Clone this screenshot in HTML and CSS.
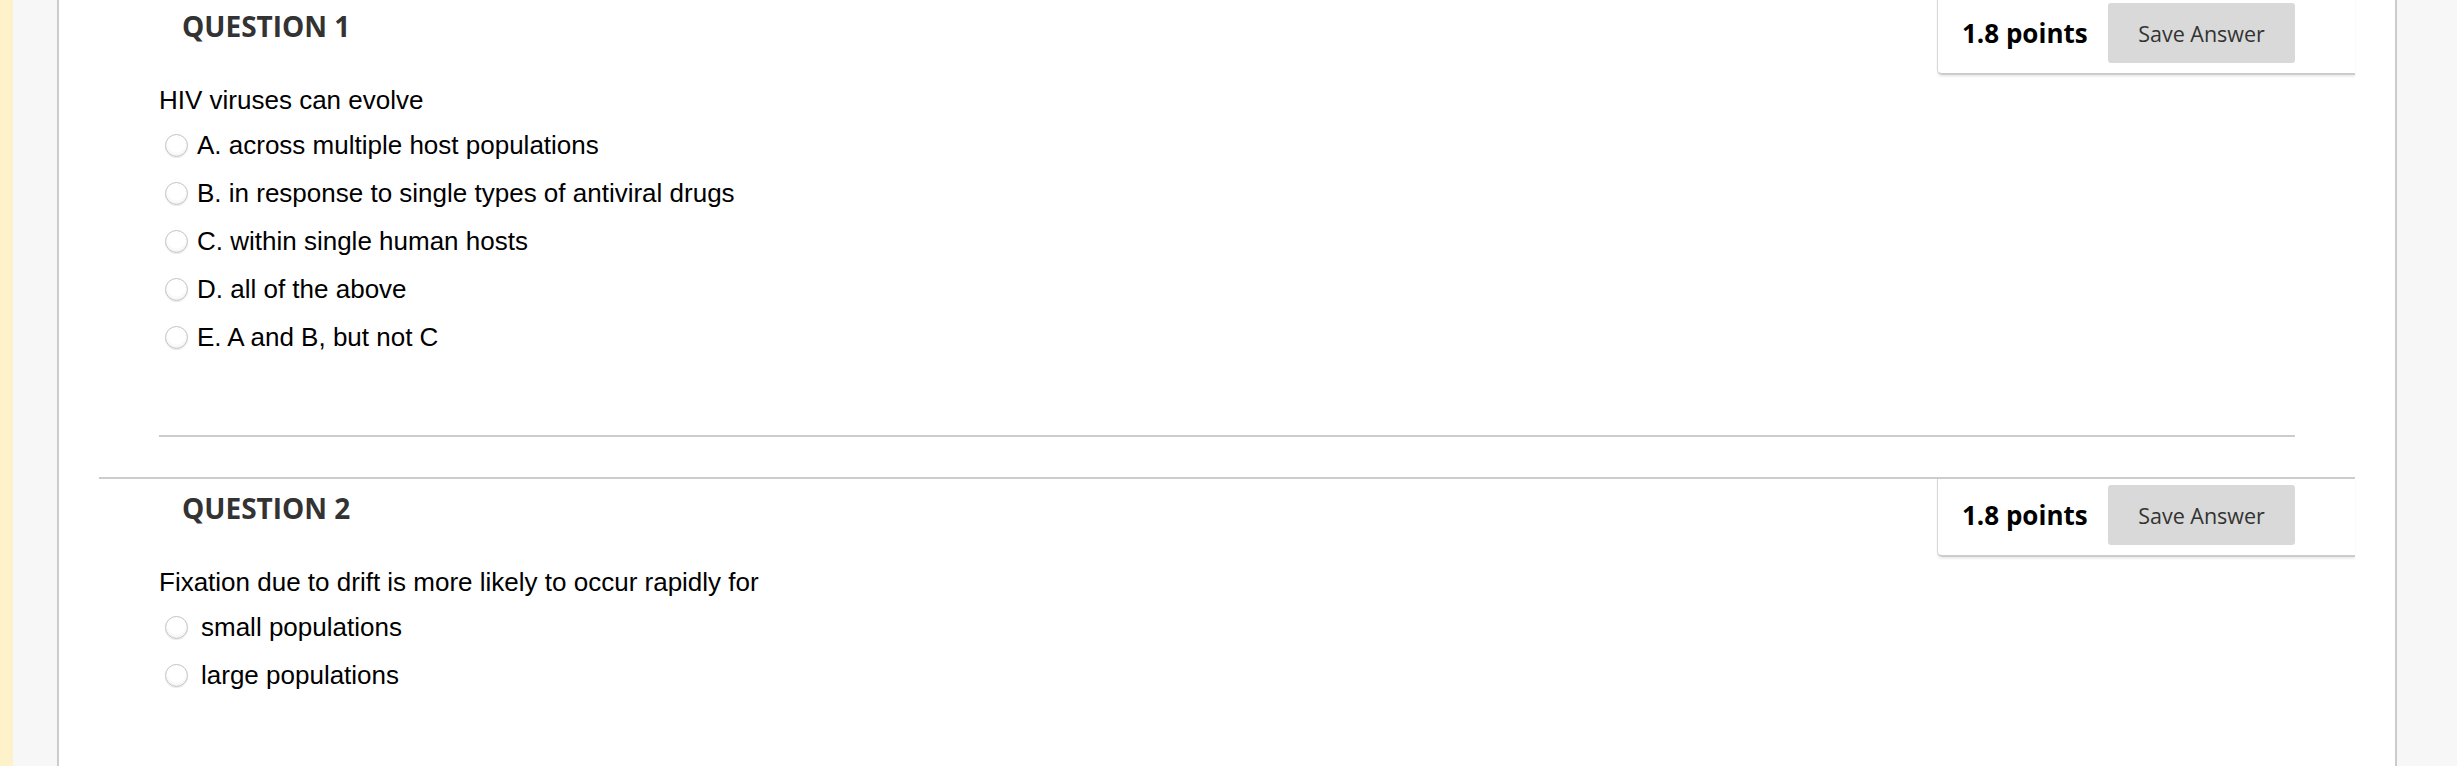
FILE: index.html
```html
<!DOCTYPE html>
<html lang="en">
<head>
<meta charset="utf-8">
<title>Test</title>
<link rel="stylesheet" href="styles.css">
</head>
<body>
<div class="page">
  <div class="stripe"></div>
  <div class="side-left"></div>
  <main class="main">
    <div class="scroller">
      <section class="question">
        <div class="q-head">
          <h3 class="q-title">QUESTION 1</h3>
          <div class="points-box">
            <span class="points">1.8 points</span>
            <button class="save-btn" type="button">Save Answer</button>
          </div>
        </div>
        <div class="q-body q-body--sep">
          <p class="q-text">HIV viruses can evolve</p>
          <ul class="options">
            <li class="option"><input type="radio" class="radio" name="q1"><label>A. across multiple host populations</label></li>
            <li class="option"><input type="radio" class="radio" name="q1"><label>B. in response to single types of antiviral drugs</label></li>
            <li class="option"><input type="radio" class="radio" name="q1"><label>C. within single human hosts</label></li>
            <li class="option"><input type="radio" class="radio" name="q1"><label>D. all of the above</label></li>
            <li class="option"><input type="radio" class="radio" name="q1"><label>E. A and B, but not C</label></li>
          </ul>
        </div>
      </section>
      <section class="question question--next">
        <div class="q-head">
          <h3 class="q-title">QUESTION 2</h3>
          <div class="points-box">
            <span class="points">1.8 points</span>
            <button class="save-btn" type="button">Save Answer</button>
          </div>
        </div>
        <div class="q-body">
          <p class="q-text">Fixation due to drift is more likely to occur rapidly for</p>
          <ul class="options">
            <li class="option option--plain"><input type="radio" class="radio" name="q2"><label>small populations</label></li>
            <li class="option option--plain"><input type="radio" class="radio" name="q2"><label>large populations</label></li>
          </ul>
        </div>
      </section>
    </div>
  </main>
  <div class="side-right"></div>
</div>
</body>
</html>
```

FILE: styles.css
```css
html, body {
  margin: 0;
  padding: 0;
  background: #ffffff;
}

body {
  overflow: hidden;
  font-family: "Liberation Sans", Arial, sans-serif;
  color: #000;
}

.page {
  display: flex;
  height: 766px;
  overflow: hidden;
}

.stripe {
  width: 13px;
  flex: none;
  background: #fdf2c9;
}

.side-left {
  width: 44px;
  flex: none;
  background: #f7f7f7;
  border-right: 2px solid #cccccc;
}

.main {
  flex: 1;
  min-width: 0;
  background: #ffffff;
  padding: 0 40px;
  overflow: hidden;
}

.side-right {
  width: 60px;
  flex: none;
  background: #f7f7f7;
  border-left: 2px solid #cccccc;
}

.scroller {
  margin-top: -5px;
}

.question {
  border-top: 2px solid #cccccc;
}

.question--next {
  margin-top: 40px;
}

.q-head {
  display: flex;
  align-items: flex-start;
}

.q-title {
  flex: 1;
  margin: 10px 0 0;
  padding-left: 83px;
  font-family: "Open Sans", sans-serif;
  font-weight: 700;
  font-size: 28px;
  line-height: 38px;
  color: #333333;
}

.points-box {
  width: 418px;
  box-sizing: border-box;
  display: flex;
  align-items: center;
  padding: 6px 60px 10px 24px;
  border-left: 1px solid #d6d6d6;
  border-bottom: 2px solid #cccccc;
  border-bottom-left-radius: 5px;
  box-shadow: 0 2px 2px rgba(0, 0, 0, 0.07);
}

.points {
  font-family: "Open Sans", sans-serif;
  font-weight: 700;
  font-size: 26px;
  line-height: 36px;
  color: #000;
  white-space: nowrap;
}

.save-btn {
  margin-left: auto;
  width: 187px;
  height: 60px;
  padding: 0;
  border: none;
  border-radius: 3px;
  background: #d9d9d9;
  color: #333333;
  font-family: "Open Sans", sans-serif;
  font-size: 21.5px;
  white-space: nowrap;
}

.q-body {
  margin: 0 60px;
  padding: 10px 0 74px;
}

.q-body--sep {
  border-bottom: 2px solid #cccccc;
}

.q-text {
  margin: 0 0 6px;
  font-size: 26px;
  line-height: 30px;
}

.options {
  list-style: none;
  margin: 0;
  padding: 0;
}

.option {
  display: flex;
  align-items: center;
  height: 48px;
  font-size: 26px;
  line-height: 30px;
}

.radio {
  -webkit-appearance: none;
  appearance: none;
  flex: none;
  width: 23px;
  height: 23px;
  margin: 0 9px 0 6px;
  border-radius: 50%;
  border: 1px solid #c3c3c3;
  background: radial-gradient(circle at 50% 40%, #ffffff 50%, #e6e6e6 100%);
  box-shadow: 0 1px 1px rgba(0, 0, 0, 0.08);
}

.option--plain .radio {
  margin-right: 13px;
}
```
